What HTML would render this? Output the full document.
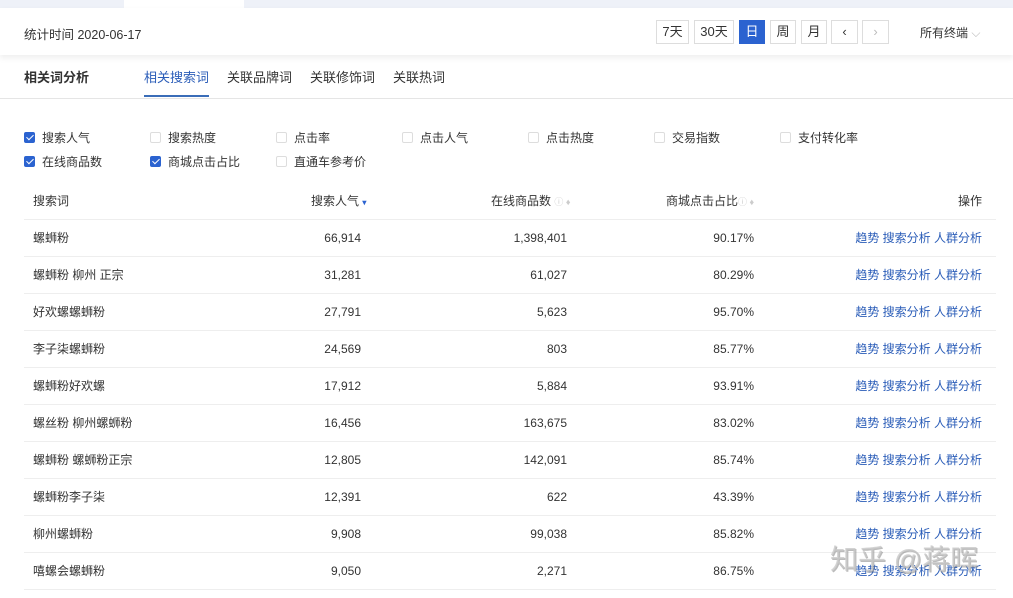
<!DOCTYPE html>
<html><head><meta charset="utf-8"><style>
*{margin:0;padding:0;box-sizing:border-box}
body{width:1013px;height:598px;overflow:hidden;background:#fff;font-family:"Liberation Sans","Noto Sans CJK SC",sans-serif;font-size:12px;color:#333;position:relative}
.abs{position:absolute}
.top{left:0;top:0;width:1013px;height:8px;background:#eef1f8}
.tab{left:124px;top:0;width:120px;height:8px;background:#fff}
.hdr{left:0;top:8px;width:1013px;height:47px;background:#fff;box-shadow:0 3px 6px rgba(0,0,0,.07)}
.btn{position:absolute;top:20px;height:24px;border:1px solid #ddd;background:#fff;text-align:center;line-height:22px;font-size:13px;color:#333}
.t{position:absolute;top:67px;font-size:13px;color:#333}
.cb{position:absolute;width:11px;height:11px;border:1px solid #ddd;border-radius:2px;background:#fff}
.cb.on{background:#2b63d0;border-color:#2b63d0}
.cb.on::after{content:"";position:absolute;left:3px;top:0px;width:3px;height:6px;border:solid #fff;border-width:0 1.5px 1.5px 0;transform:rotate(45deg)}
.lbl{position:absolute;font-size:12px;color:#333;line-height:14px}
.row{position:absolute;left:24px;width:972px;height:37px;border-bottom:1px solid #eee}
.row span{position:absolute;top:11px;line-height:14px;height:14px;display:block}
.a{color:#2b5db8}
</style></head><body>
<div class="abs top"></div><div class="abs tab"></div>
<div class="abs hdr"></div>
<div class="abs" style="left:24px;top:24px;font-size:12.5px">统计时间 2020-06-17</div>
<div class="btn" style="left:656px;width:33px">7天</div>
<div class="btn" style="left:694px;width:40px">30天</div>
<div class="btn" style="left:739px;width:26px;background:#2b63d0;border-color:#2b63d0;color:#fff">日</div>
<div class="btn" style="left:770px;width:26px">周</div>
<div class="btn" style="left:801px;width:26px">月</div>
<div class="btn" style="left:831px;width:27px">‹</div>
<div class="btn" style="left:862px;width:27px;color:#bbb">›</div>
<div class="abs" style="left:920px;top:24px;font-size:12px">所有终端 <span style="color:#bbb">⌵</span></div>
<div class="t" style="left:24px;font-weight:bold">相关词分析</div>
<div class="t" style="left:144px;color:#2b5db8">相关搜索词</div>
<div class="abs" style="left:144px;top:95px;width:65px;height:2px;background:#3a6db8"></div>
<div class="t" style="left:227px">关联品牌词</div>
<div class="t" style="left:310px">关联修饰词</div>
<div class="t" style="left:393px">关联热词</div>
<div class="abs" style="left:0;top:98px;width:1013px;height:1px;background:#e5e5e5"></div>

<div class="cb on" style="left:24px;top:132px"></div><div class="lbl" style="left:42px;top:131px">搜索人气</div>
<div class="cb" style="left:150px;top:132px"></div><div class="lbl" style="left:168px;top:131px">搜索热度</div>
<div class="cb" style="left:276px;top:132px"></div><div class="lbl" style="left:294px;top:131px">点击率</div>
<div class="cb" style="left:402px;top:132px"></div><div class="lbl" style="left:420px;top:131px">点击人气</div>
<div class="cb" style="left:528px;top:132px"></div><div class="lbl" style="left:546px;top:131px">点击热度</div>
<div class="cb" style="left:654px;top:132px"></div><div class="lbl" style="left:672px;top:131px">交易指数</div>
<div class="cb" style="left:780px;top:132px"></div><div class="lbl" style="left:798px;top:131px">支付转化率</div>
<div class="cb on" style="left:24px;top:156px"></div><div class="lbl" style="left:42px;top:155px">在线商品数</div>
<div class="cb on" style="left:150px;top:156px"></div><div class="lbl" style="left:168px;top:155px">商城点击占比</div>
<div class="cb" style="left:276px;top:156px"></div><div class="lbl" style="left:294px;top:155px">直通车参考价</div>

<div class="row" style="top:183px"><span style="left:9px">搜索词</span><span style="left:287px">搜索人气 <b style="color:#2b63d0;font-size:8px">▾</b></span><span style="left:467px">在线商品数 <b style="color:#ccc;font-size:9px;font-weight:normal">ⓘ ♦</b></span><span style="left:642px">商城点击占比<b style="color:#ccc;font-size:9px;font-weight:normal">ⓘ ♦</b></span><span style="right:14px">操作</span></div>
<div class="row" style="top:220px"><span style="left:9px">螺蛳粉</span><span style="right:635px">66,914</span><span style="right:429px">1,398,401</span><span style="right:242px">90.17%</span><span class="a" style="right:14px">趋势 搜索分析 人群分析</span></div>
<div class="row" style="top:257px"><span style="left:9px">螺蛳粉 柳州 正宗</span><span style="right:635px">31,281</span><span style="right:429px">61,027</span><span style="right:242px">80.29%</span><span class="a" style="right:14px">趋势 搜索分析 人群分析</span></div>
<div class="row" style="top:294px"><span style="left:9px">好欢螺螺蛳粉</span><span style="right:635px">27,791</span><span style="right:429px">5,623</span><span style="right:242px">95.70%</span><span class="a" style="right:14px">趋势 搜索分析 人群分析</span></div>
<div class="row" style="top:331px"><span style="left:9px">李子柒螺蛳粉</span><span style="right:635px">24,569</span><span style="right:429px">803</span><span style="right:242px">85.77%</span><span class="a" style="right:14px">趋势 搜索分析 人群分析</span></div>
<div class="row" style="top:368px"><span style="left:9px">螺蛳粉好欢螺</span><span style="right:635px">17,912</span><span style="right:429px">5,884</span><span style="right:242px">93.91%</span><span class="a" style="right:14px">趋势 搜索分析 人群分析</span></div>
<div class="row" style="top:405px"><span style="left:9px">螺丝粉 柳州螺蛳粉</span><span style="right:635px">16,456</span><span style="right:429px">163,675</span><span style="right:242px">83.02%</span><span class="a" style="right:14px">趋势 搜索分析 人群分析</span></div>
<div class="row" style="top:442px"><span style="left:9px">螺蛳粉 螺蛳粉正宗</span><span style="right:635px">12,805</span><span style="right:429px">142,091</span><span style="right:242px">85.74%</span><span class="a" style="right:14px">趋势 搜索分析 人群分析</span></div>
<div class="row" style="top:479px"><span style="left:9px">螺蛳粉李子柒</span><span style="right:635px">12,391</span><span style="right:429px">622</span><span style="right:242px">43.39%</span><span class="a" style="right:14px">趋势 搜索分析 人群分析</span></div>
<div class="row" style="top:516px"><span style="left:9px">柳州螺蛳粉</span><span style="right:635px">9,908</span><span style="right:429px">99,038</span><span style="right:242px">85.82%</span><span class="a" style="right:14px">趋势 搜索分析 人群分析</span></div>
<div class="row" style="top:553px"><span style="left:9px">嘻螺会螺蛳粉</span><span style="right:635px">9,050</span><span style="right:429px">2,271</span><span style="right:242px">86.75%</span><span class="a" style="right:14px">趋势 搜索分析 人群分析</span></div>
<div class="abs" style="left:830px;top:538px;font-size:28px;color:rgba(200,200,200,.8);text-shadow:1px 1px 0 rgba(120,120,120,.5)">知乎 @蒋晖</div>
</body></html>
